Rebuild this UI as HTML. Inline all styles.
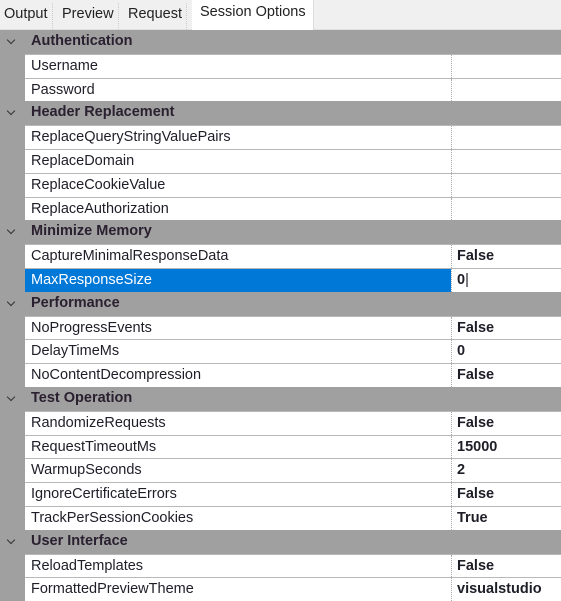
<!DOCTYPE html>
<html><head><style>
*{margin:0;padding:0;box-sizing:border-box}
body{width:561px;height:601px;overflow:hidden;background:#a0a0a0;font-family:"Liberation Sans",sans-serif;font-size:14.5px;color:#1e1e28}
.tabs{height:30px;background:#f0f0f0;position:relative;border-bottom:1px solid #e0e0e0}
.tab{position:absolute;top:3px;height:27px;line-height:22px;padding:0 4px;border-right:1px dotted #ccc;font-size:14.5px;color:#222}
.tab.a{top:0;height:30px;background:#fff;line-height:24px;border-right:1px solid #ddd;padding-left:8px}
.row{height:23.8px;position:relative;line-height:23px;white-space:nowrap}
.cat{background:#a0a0a0;font-weight:bold;color:#2a2030;padding-left:31px;font-size:14.5px}
.cat:before{content:"";position:absolute;left:8px;top:7px;width:5px;height:5px;border-right:1.5px solid #333;border-bottom:1.5px solid #333;transform:rotate(45deg)}
.p{margin-left:25px;background:#fff;border-top:1px solid #b8b8b8;padding-left:6px}
.p .v{position:absolute;left:426px;top:0;bottom:0;right:0;border-left:1px dotted #aaa;padding-left:5px;font-weight:bold;background:#fff;color:#1e1e28}
.sel{background:#0078d7;color:#fff}
</style></head><body>
<div class="tabs">
<div class="tab" style="left:0">Output</div>
<div class="tab" style="left:58px">Preview</div>
<div class="tab" style="left:124px">Request</div>
<div class="tab a" style="left:192px;width:122px">Session Options</div>
</div>
<div class="row cat">Authentication</div>
<div class="row p">Username<span class="v"></span></div>
<div class="row p">Password<span class="v"></span></div>
<div class="row cat">Header Replacement</div>
<div class="row p">ReplaceQueryStringValuePairs<span class="v"></span></div>
<div class="row p">ReplaceDomain<span class="v"></span></div>
<div class="row p">ReplaceCookieValue<span class="v"></span></div>
<div class="row p">ReplaceAuthorization<span class="v"></span></div>
<div class="row cat">Minimize Memory</div>
<div class="row p">CaptureMinimalResponseData<span class="v">False</span></div>
<div class="row p sel">MaxResponseSize<span class="v">0<span style="font-weight:normal">|</span></span></div>
<div class="row cat">Performance</div>
<div class="row p">NoProgressEvents<span class="v">False</span></div>
<div class="row p">DelayTimeMs<span class="v">0</span></div>
<div class="row p">NoContentDecompression<span class="v">False</span></div>
<div class="row cat">Test Operation</div>
<div class="row p">RandomizeRequests<span class="v">False</span></div>
<div class="row p">RequestTimeoutMs<span class="v">15000</span></div>
<div class="row p">WarmupSeconds<span class="v">2</span></div>
<div class="row p">IgnoreCertificateErrors<span class="v">False</span></div>
<div class="row p">TrackPerSessionCookies<span class="v">True</span></div>
<div class="row cat">User Interface</div>
<div class="row p">ReloadTemplates<span class="v">False</span></div>
<div class="row p">FormattedPreviewTheme<span class="v">visualstudio</span></div>
</body></html>
